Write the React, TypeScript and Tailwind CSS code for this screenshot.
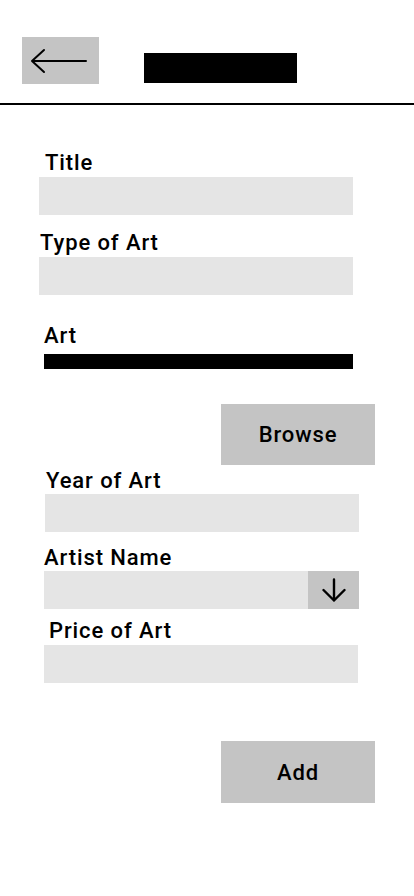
import React from "react";

const font = { fontFamily: "Roboto, 'Noto Sans', sans-serif" };

function Label({ text, cls }: { text: string; cls: string }) {
  return (
    <div className={`text-[22px] leading-[26px] font-medium tracking-[0.9px] text-black ${cls}`}>
      {text}
    </div>
  );
}

export default function App() {
  return (
    <div className="w-[414px] h-[896px] bg-white overflow-hidden" style={font}>
      <div className="flex items-start pl-[22px] pt-[37px]">
        <button className="w-[77px] h-[47px] bg-[#c4c4c4] flex items-center justify-center">
          <svg width="77" height="47" viewBox="0 0 77 47">
            <path d="M10 24 L64 24 M22 13 L10 24 L22 35" fill="none" stroke="#000" strokeWidth="2" strokeLinecap="round" strokeLinejoin="round" />
          </svg>
        </button>
        <div className="ml-[45px] mt-[16px] w-[153px] h-[30px] bg-black" />
      </div>
      <div className="mt-[19px] h-[2px] bg-black" />

      <div className="flex flex-col">
        <Label text="Title" cls="mt-[45px] ml-[45px]" />
        <div className="mt-[1px] ml-[39px] w-[314px] h-[38px] bg-[#e5e5e5]" />

        <Label text="Type of Art" cls="mt-[15px] ml-[40px]" />
        <div className="mt-[1px] ml-[39px] w-[314px] h-[38px] bg-[#e5e5e5]" />

        <Label text="Art" cls="mt-[28px] ml-[44px]" />
        <div className="mt-[5px] ml-[44px] w-[309px] h-[15px] bg-black" />

        <button className="mt-[35px] ml-[221px] w-[154px] h-[61px] bg-[#c4c4c4] text-[22px] font-medium tracking-[0.9px] text-black">
          Browse
        </button>

        <Label text="Year of Art" cls="mt-[3px] ml-[46px]" />
        <div className="ml-[45px] w-[314px] h-[38px] bg-[#e5e5e5]" />

        <Label text="Artist Name" cls="mt-[13px] ml-[44px]" />
        <div className="ml-[44px] w-[315px] h-[38px] bg-[#e5e5e5] flex justify-end">
          <div className="w-[51px] h-[38px] bg-[#c4c4c4] flex items-center justify-center">
            <svg width="24" height="24" viewBox="0 0 24 24">
              <path d="M12 1.5 L12 22.5 M1.5 12 L12 22.5 L22.5 12" fill="none" stroke="#000" strokeWidth="2.4" strokeLinecap="round" strokeLinejoin="round" />
            </svg>
          </div>
        </div>

        <Label text="Price of Art" cls="mt-[9px] ml-[49px]" />
        <div className="mt-[1px] ml-[44px] w-[314px] h-[38px] bg-[#e5e5e5]" />

        <button className="mt-[58px] ml-[221px] w-[154px] h-[62px] bg-[#c4c4c4] text-[22px] font-medium tracking-[0.9px] text-black">
          Add
        </button>
      </div>
    </div>
  );
}
